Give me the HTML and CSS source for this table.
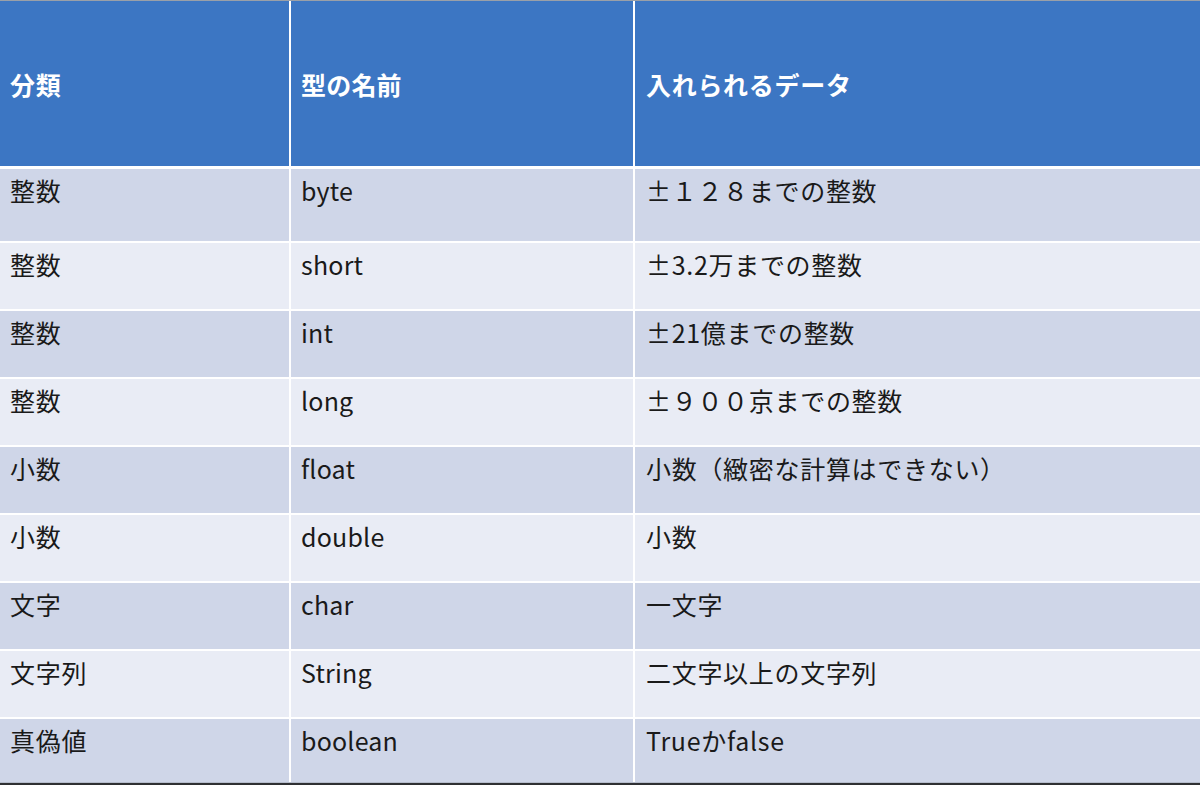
FILE: index.html
```html
<!DOCTYPE html>
<html lang="ja">
<head>
<meta charset="utf-8">
<link rel="stylesheet" href="styles.css">
</head>
<body>
<div class="table">
  <div class="row head">
    <div class="cell">分類</div>
    <div class="cell">型の名前</div>
    <div class="cell">入れられるデータ</div>
  </div>
  <div class="row odd first">
    <div class="cell">整数</div>
    <div class="cell">byte</div>
    <div class="cell">±１２８までの整数</div>
  </div>
  <div class="row even">
    <div class="cell">整数</div>
    <div class="cell">short</div>
    <div class="cell">±3.2万までの整数</div>
  </div>
  <div class="row odd">
    <div class="cell">整数</div>
    <div class="cell">int</div>
    <div class="cell">±21億までの整数</div>
  </div>
  <div class="row even">
    <div class="cell">整数</div>
    <div class="cell">long</div>
    <div class="cell">±９００京までの整数</div>
  </div>
  <div class="row odd">
    <div class="cell">小数</div>
    <div class="cell">float</div>
    <div class="cell">小数（緻密な計算はできない）</div>
  </div>
  <div class="row even">
    <div class="cell">小数</div>
    <div class="cell">double</div>
    <div class="cell">小数</div>
  </div>
  <div class="row odd">
    <div class="cell">文字</div>
    <div class="cell">char</div>
    <div class="cell">一文字</div>
  </div>
  <div class="row even">
    <div class="cell">文字列</div>
    <div class="cell">String</div>
    <div class="cell">二文字以上の文字列</div>
  </div>
  <div class="row odd last">
    <div class="cell">真偽値</div>
    <div class="cell">boolean</div>
    <div class="cell">Trueかfalse</div>
  </div>
</div>
</body>
</html>
```

FILE: styles.css
```css
html, body {
  margin: 0;
  padding: 0;
  background: #ffffff;
}
body {
  width: 1200px;
  height: 785px;
  overflow: hidden;
  font-family: "Noto Sans CJK JP", "Noto Sans", sans-serif;
  color: #1a1a1a;
}
.table {
  display: flex;
  flex-direction: column;
  gap: 2px;
  background: #ffffff;
  border-top: 1px solid #9aa0a8;
  border-bottom: 2px solid #2f3033;
}
.row {
  display: grid;
  grid-template-columns: 289px 342px 1fr;
  column-gap: 2px;
  height: 66px;
}
.cell {
  font-size: 25px;
  line-height: 28px;
  padding: 7px 0 0 10px;
  box-sizing: border-box;
  white-space: nowrap;
  letter-spacing: 0.7px;
}
.row .cell:nth-child(2) { padding-left: 10px; letter-spacing: 0.2px; }
.row .cell:nth-child(3) { padding-left: 11px; }
.head {
  height: 165px;
  margin-bottom: 1px;
}
.head .cell {
  background: #3c76c3;
  color: #ffffff;
  font-weight: bold;
  padding-top: 0;
  display: flex;
  align-items: center;
  letter-spacing: 0.7px;
}
.first { height: 72px; }
.odd .cell { background: #cfd6e8; }
.even .cell { background: #e9ecf5; }
.last {
  height: 63px;
  border-bottom: 1px solid #b6bdcc;
}
```
